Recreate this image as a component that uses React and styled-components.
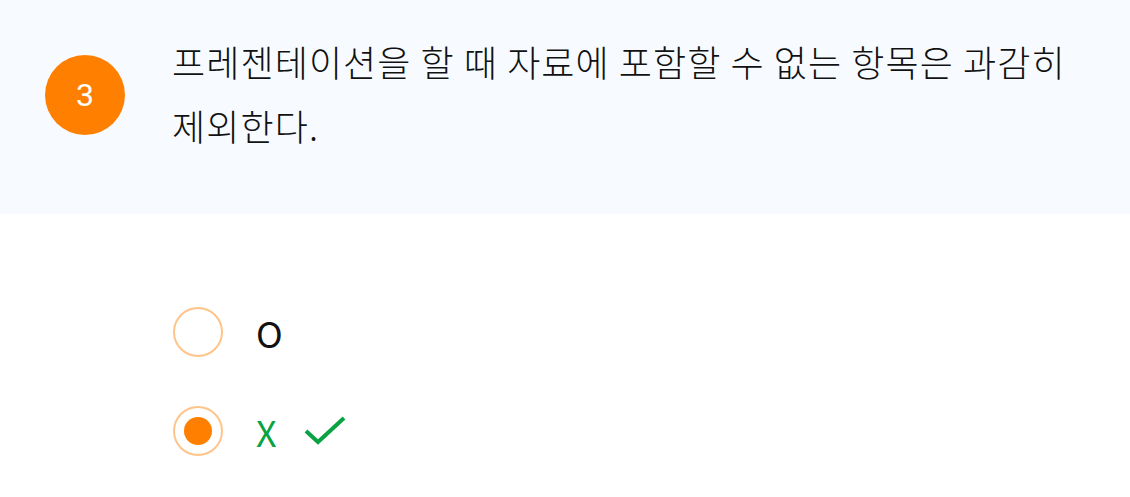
import React from 'react';
import styled, { createGlobalStyle } from 'styled-components';

const GlobalStyle = createGlobalStyle`
  html, body {
    margin: 0;
    padding: 0;
    background: #ffffff;
  }
  body {
    font-family: "Noto Sans CJK KR", "Noto Sans", sans-serif;
  }
`;

const QuestionBox = styled.div`
  display: flex;
  align-items: center;
  height: 214px;
  box-sizing: border-box;
  padding: 0 20px 28px 45px;
  background-color: #f7fbff;
`;

const Badge = styled.div`
  flex: none;
  width: 80px;
  height: 80px;
  border-radius: 50%;
  background-color: #ff8000;
  color: #ffffff;
  display: flex;
  align-items: center;
  justify-content: center;
  font-family: "Roboto", "Noto Sans", sans-serif;
  font-size: 32px;
  margin: 4px 47px 0 0;
`;

const QuestionText = styled.p`
  margin: 0;
  font-size: 36px;
  font-weight: 300;
  line-height: 64px;
  letter-spacing: 1.1px;
  word-break: keep-all;
  color: #111111;
`;

const Options = styled.div`
  display: flex;
  flex-direction: column;
  gap: 49px;
  padding: 93px 0 0 173px;
`;

const Option = styled.label`
  display: flex;
  align-items: center;
  height: 50px;
  cursor: pointer;
`;

const Radio = styled.span`
  flex: none;
  width: 50px;
  height: 50px;
  box-sizing: border-box;
  border-radius: 50%;
  border: 2px solid #ffc48a;
  background: #ffffff;
  display: flex;
  align-items: center;
  justify-content: center;

  &::after {
    content: '';
    width: 28px;
    height: 28px;
    border-radius: 50%;
    background-color: #ff8000;
    display: ${props => (props.$checked ? 'block' : 'none')};
  }
`;

const OptionLabel = styled.span`
  margin-left: 33px;
  font-size: 36px;
  font-weight: 400;
  line-height: 50px;
  color: ${props => (props.$correct ? '#0aa344' : '#111111')};
`;

const Check = styled.svg`
  margin-left: 27px;
  width: 42px;
  height: 30px;
`;

const options = [
  { label: 'O', checked: false, correct: false },
  { label: 'X', checked: true, correct: true },
];

const App = () => {
  return (
    <>
      <GlobalStyle />
      <QuestionBox>
        <Badge>3</Badge>
        <QuestionText>
          프레젠테이션을 할 때 자료에 포함할 수 없는 항목은 과감히 제외한다.
        </QuestionText>
      </QuestionBox>
      <Options>
        {options.map(opt => (
          <Option key={opt.label}>
            <Radio $checked={opt.checked} />
            <OptionLabel $correct={opt.correct}>{opt.label}</OptionLabel>
            {opt.correct && (
              <Check viewBox="0 0 42 30">
                <polyline points="2,15 14,26 40,2" fill="none" stroke="#0aa344" strokeWidth="4" />
              </Check>
            )}
          </Option>
        ))}
      </Options>
    </>
  );
};

export default App;
